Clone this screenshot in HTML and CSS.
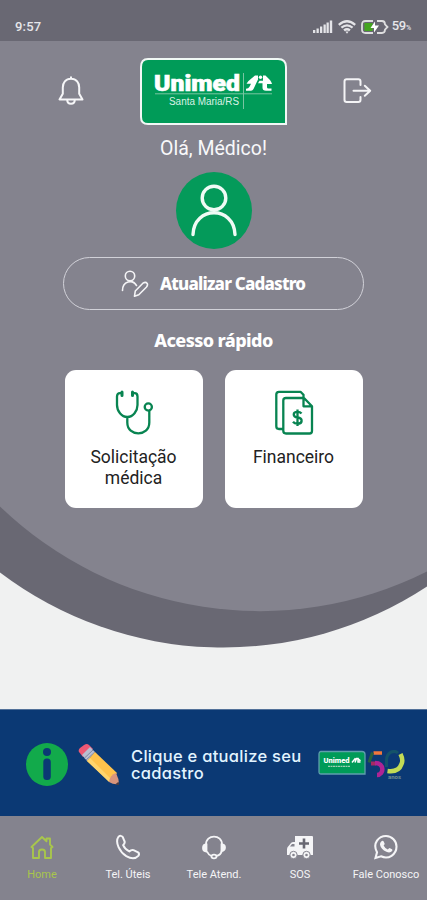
FILE: index.html
```html
<!DOCTYPE html>
<html lang="pt-BR">
<head>
<meta charset="utf-8">
<meta name="viewport" content="width=device-width, initial-scale=1">
<title>Unimed Santa Maria</title>
<link rel="stylesheet" href="styles.css">
</head>
<body>
<div class="app">
  <svg class="backdrop" viewBox="0 0 427 709" aria-hidden="true">
    <path fill="#696873" d="M0 0H427V586.500A370 370 0 0 1 0 572.500Z"/>
    <path fill="#84838e" d="M0 41H427V571.500A374 374 0 0 1 0 506.500Z"/>
  </svg>

  <div class="status">
    <span class="clock">9:57</span>
    <div class="indicators">
      <svg width="20" height="14" viewBox="0 0 20 14" fill="#e4e4e8"><path d="M0 10h2.300v3H0zM3.500 8.500h2.300V13H3.500zM7 6.500h2.300V13H7zM10.500 4.500h2.300V13h-2.300zM13.500 2.500h2.300V13h-2.300zM16.800 .5h2.400V13h-2.400z"/></svg>
      <svg width="18" height="14" viewBox="0 0 18 14" fill="none" stroke="#e4e4e8" stroke-width="2.300"><path d="M.8 4.800Q9-2.200 17.200 4.800M3.400 7.700Q9 3 14.600 7.700M6 10.400Q9 8 12 10.400"/><path d="M7.300 11.600h3.400L9 13.700z" fill="#e4e4e8" stroke="none"/></svg>
      <svg width="28" height="14" viewBox="0 0 28 14"><path d="M12 1H4.500Q1 1 1 4.500v5Q1 13 4.500 13H12M16 1h5q3 0 3 3.500L26.500 7 24 9.500q0 3.500-3 3.500h-5" fill="none" stroke="#dededf" stroke-width="1.800"/><path d="M3.500 3h8v8h-8z" fill="#44a520"/><path d="M14 1.500v4h4l-5 7v-4.500H9.500z" fill="#fff"/></svg>
      <span class="level">59<small>%</small></span>
    </div>
  </div>

  <main class="main">
    <header class="top">
      <svg class="bell" width="26" height="32" viewBox="0 0 26 32" fill="none" stroke="#f6f6f8" stroke-width="2" stroke-linejoin="round" stroke-linecap="round"><path d="M13 2.300v1.500M13 3.800C7.500 3.800 4.800 8 4.800 12.500v6.200L1.500 24.500h23l-3.300-5.800v-6.200C21.200 8 18.500 3.800 13 3.800zM9.200 24.800c0 5.300 7.600 5.300 7.600 0"/></svg>
      <svg class="logo" width="147" height="67" viewBox="0 0 147 67">
        <path d="M8 1h130q8 0 8 8v57H8q-7 0-7-7V9q0-8 7-8z" fill="#009b58" stroke="#f1f8f5" stroke-width="2"/>
        <text x="14" y="33" class="brand" textLength="86" lengthAdjust="spacingAndGlyphs">Unimed</text>
        <text x="29" y="46.500" class="place" textLength="70" lengthAdjust="spacingAndGlyphs">Santa Maria/RS</text>
        <path d="M15 35.800h117M103.500 15v36" stroke="#78c5a1" stroke-width="1" fill="none"/>
        <g fill="#fff">
          <path d="M115 17.500h3v4l-1 2-3.500 7.500q-.8 1.800-2.500 1.800H106v-2q2.500 0 3.500-2l1.500-3h-4.500q1.500-3 4-4.500z"/>
          <path d="M123 17.500h2.500l4.500 4.500q1.500 2 2 4h-5v3.200q0 1.300 1.500 1.300h3v2.300h-5.500q-3.500 0-3.500-3v-4.500h-4.500l1.500-2.500h3.500z"/>
          <circle cx="120.500" cy="19.300" r="1.700"/>
        </g>
      </svg>
      <svg class="exit" width="29" height="26" viewBox="0 0 29 26" fill="none" stroke="#f4f4f6" stroke-width="2" stroke-linecap="round" stroke-linejoin="round"><path d="M17.500 7V3.500q0-2.200-2.200-2.200H3.700Q1.500 1.300 1.500 3.500v18.300q0 2.200 2.200 2.200h11.600q2.200 0 2.200-2.200V19M10.500 12.800H27M21.800 7.800l5.400 5-5.400 5"/></svg>
    </header>

    <p class="hello">Olá, Médico!</p>
    <div class="avatar">
      <svg width="76" height="76" viewBox="0 0 76 76" fill="none" stroke="#effbf5" stroke-width="3.400" stroke-linecap="round"><circle cx="38" cy="26" r="11.800"/><path d="M17 62.500C18 33.500 58 33.500 59 62.500"/></svg>
    </div>
    <a class="update">
      <svg width="28" height="28" viewBox="0 0 28 28" fill="none" stroke="#f4f4f6" stroke-width="1.600" stroke-linecap="round" stroke-linejoin="round"><circle cx="9" cy="6" r="4.700"/><path d="M1.500 20.500C1.500 11.300 11.500 8.700 15.500 15.500M13.500 26.200l.8-5.200 7.600-7.800q2.800-1.800 4.300.2.900 1.800-.9 3.800l-7.500 7.500z"/></svg>
      <span>Atualizar Cadastro</span>
    </a>
    <h2 class="title">Acesso rápido</h2>

    <div class="cards">
      <a class="card">
        <svg width="40" height="46" viewBox="0 0 40 46" fill="none" stroke="#088451" stroke-width="2.300" stroke-linecap="round" stroke-linejoin="round"><path d="M8 3.200H6Q3 3.200 3 6.500v8.500C3 21 7.500 27 13.300 27S23.500 21 23.500 15V6.500Q23.500 3.200 20.500 3.200H18.500M13.300 27v5.500c0 14.500 22 14.500 22 0V21"/><path d="M8 2v3.500M18.500 2v3.500" stroke-width="3"/><circle cx="34.300" cy="17" r="3.600"/></svg>
        <span>Solicitação médica</span>
      </a>
      <a class="card">
        <svg width="40" height="46" viewBox="0 0 40 46" fill="none" stroke="#088451" stroke-width="2.300" stroke-linejoin="round"><path d="M9 39H5q-2.700 0-2.700-2.700V4.500Q2.300 1.800 5 1.800h21.500l3 3V8M12 8h18l8 8.300V41q0 2.500-2.500 2.500H12q-2.700 0-2.700-2.700V10.500Q9.300 8 12 8zM29.500 8v8.300H38"/><path d="M27.500 23.500q-1.300-1.700-4-1.700c-5 0-5 5 0 5.700 5.700.8 5.300 6.200 0 6.200q-3 0-4.500-2M23.500 19.500V36"/></svg>
        <span>Financeiro</span>
      </a>
    </div>
  </main>

  <a class="banner">
    <svg class="info" width="42" height="43" viewBox="0 0 42 43"><ellipse cx="21" cy="21.500" rx="21" ry="21.500" fill="#12aa4b"/><g fill="#0b3974"><circle cx="21" cy="9" r="4"/><rect x="17.300" y="15.500" width="7.500" height="21.500" rx="3.500"/></g></svg>
    <svg class="pencil" width="42" height="42" viewBox="0 0 42 42"><path d="M1 8q-1-2 1-4l4-3q3-2 5 0l4 4L5 13z" fill="#ee5874"/><path d="M4 11L12 3l5 5-8 9z" fill="#b9bed0"/><path d="M6.500 14L15 6M8 16L17 8" stroke="#8188a5" stroke-width="1"/><path d="M9 17L17 8l22 21-7 9z" fill="#ffc34c"/><path d="M9 17l3-3 22 22-3 2z" fill="#ffd56d"/><path d="M31 38q1-7 7-9 3 6 3 11-5 1-10-2z" fill="#d9957c"/><path d="M37 40.500l3.500-2.700.7 2q.2 1.300-1.300 1.300z" fill="#493b45"/></svg>
    <span class="message">Clique e atualize seu cadastro</span>
    <svg class="badge" width="88" height="30" viewBox="0 0 88 30">
      <path d="M3 1.500h41q3 0 3 3V24H3q-2 0-2-2V4.500q0-3 2-3z" fill="#009b58" stroke="#5f9eac" stroke-width="1.300"/>
      <text x="5.500" y="13" class="mini-brand" textLength="26" lengthAdjust="spacingAndGlyphs">Unimed</text>
      <path d="M34 12.500l3.500-4.300M37 12.500l1.500-4h1.500v3.500h2.500M39.500 8.300l3 2.500" fill="none" stroke="#fff" stroke-width="1.500"/>
      <path d="M10 16.300h22" stroke="#9bd0b2" stroke-width="1.200" stroke-dasharray="2 .5"/>
      <g fill="none" stroke-width="4.500"><path d="M55.500 3h8.500" stroke="#f1773c" stroke-width="3.500"/><path d="M54.500 2.500L51 12.500" stroke="#28613e" stroke-width="3"/><path d="M53 13.500h5" stroke="#a42b62" stroke-width="4"/><path d="M57 13c10 0 9 12 2 12" stroke="#ae2494"/><path d="M68.500 17V10C69 1 77 0 80 3" stroke="#14536a" stroke-width="3"/><path d="M82.500 4c2 4 2 8 1 10-2 6-7 8-14 7" stroke="#c2db55"/></g>
      <text x="70" y="29" class="years" textLength="13" lengthAdjust="spacingAndGlyphs">anos</text>
    </svg>
  </a>

  <nav class="tabs">
    <a class="tab active">
      <svg width="26" height="26" viewBox="0 0 26 26" fill="none" stroke="currentColor" stroke-width="1.900" stroke-linejoin="round"><path d="M2.500 13L13 3l4.500 4.300V4.500H21V10.500l2.500 2.500-1.500 1V24h-6v-6q0-2.500-3-2.500T10 18v6H4V14z"/></svg>
      <span>Home</span>
    </a>
    <a class="tab">
      <svg width="26" height="26" viewBox="0 0 26 26" fill="none" stroke="currentColor" stroke-width="2" stroke-linejoin="round"><path d="M3.500 2.800q2.500-2 4.300.3l1.600 4q1 1.800-1.300 4 2 4.400 6.200 6.300 2.200-2 4.200-1.300l4.600 2.300q1.700 1.300.2 3.500-4.300 4.700-12 .3C5 18-.5 8.500 3.500 2.800z"/></svg>
      <span>Tel. Úteis</span>
    </a>
    <a class="tab">
      <svg width="26" height="26" viewBox="0 0 26 26" fill="none" stroke="currentColor" stroke-width="1.800"><path d="M5 11C4.500-.3 21.500-.3 21 11v5q-1 5.500-6 6"/><path d="M5.500 10.500v7Q2 17.500 2 14t3.500-3.500zM20.500 10.500v6.500q3.500-.5 3.500-3.500t-3.500-3z" fill="currentColor"/><path d="M6 17.500q1.500 3.500 4.500 4.500"/><ellipse cx="13" cy="22.500" rx="2.500" ry="1.800"/></svg>
      <span>Tele Atend.</span>
    </a>
    <a class="tab">
      <svg width="28" height="26" viewBox="0 0 28 26"><path d="M9 2h17q1 0 1 1v18H1v-6q0-2 2-3.500L5 9q.8-1 2.500-1H9z" fill="currentColor"/><path d="M4 12.500l2-2.500h2.500v2.500z" fill="#84838e"/><path d="M18 4.500v10M13 9.500h10" stroke="#696873" stroke-width="2.600"/><g fill="currentColor" stroke="#84838e" stroke-width="1"><circle cx="7.500" cy="21" r="3.700"/><circle cx="20.500" cy="21" r="3.700"/></g><g fill="#84838e"><circle cx="7.500" cy="21" r="1.300"/><circle cx="20.500" cy="21" r="1.300"/></g></svg>
      <span>SOS</span>
    </a>
    <a class="tab">
      <svg width="26" height="26" viewBox="0 0 26 26" fill="none" stroke="currentColor" stroke-width="2.100"><path d="M2.500 24l1.500-5.700C-1 9 6 2 13 2c6 0 10.500 5 10.500 10.500C23.500 20.500 15.500 26 8 22.300z"/><path d="M8.200 7.500q1.800-1.500 2.600.3l.8 1.800q.3.800-1 2 1.500 3 4.200 4 1.400-1.900 2.200-1.400l2 1q.9.500.1 1.800-2 2.500-5.700.8-5.500-2.500-6.400-7-.2-2 1.200-3.300z" fill="currentColor" stroke="none"/></svg>
      <span>Fale Conosco</span>
    </a>
  </nav>
</div>
</body>
</html>
```

FILE: styles.css
```css
* { box-sizing: border-box; }

body {
  margin: 0;
  background: #f0f1f1;
  font-family: Roboto, "Liberation Sans", sans-serif;
}

svg { display: block; flex: none; }

.app {
  position: relative;
  width: 427px;
  height: 900px;
  display: flex;
  flex-direction: column;
  overflow: hidden;
}

.backdrop {
  position: absolute;
  top: 0;
  left: 0;
  width: 427px;
  height: 709px;
  z-index: -1;
}

.status {
  height: 41px;
  padding: 12px 16px 0 15px;
  display: flex;
  justify-content: space-between;
  color: #e6e6ea;
  font-size: 13px;
  font-weight: 500;
  line-height: 29px;
}

.clock { letter-spacing: 0.2px; }

.indicators { display: flex; align-items: center; gap: 5px; height: 29px; }
.level { margin-left: -2px; white-space: nowrap; letter-spacing: -0.2px; }
.level small { font-size: 7px; }

.main {
  height: 668px;
  display: flex;
  flex-direction: column;
  align-items: center;
}

.top {
  width: 314px;
  height: 83px;
  padding-top: 17px;
  margin-left: 3px;
  display: flex;
  justify-content: space-between;
  align-items: center;
}

.brand { font: 900 21.5px Roboto, sans-serif; fill: #fff; stroke: #fff; stroke-width: 0.6px; }
.place { font: 400 10px "Liberation Sans", sans-serif; fill: #d9f1e5; }

.hello {
  margin: 13px 0 0;
  color: #f8f8fa;
  font-size: 19.5px;
  line-height: 24px;
}

.avatar {
  width: 76px;
  height: 77px;
  margin-top: 11px;
  border-radius: 50%;
  background: #049a5a;
}

.update {
  width: 301px;
  height: 53px;
  margin-top: 8px;
  padding-left: 57px;
  display: flex;
  align-items: center;
  gap: 11px;
  border: 1.5px solid #d1d1d8;
  border-radius: 27px;
  color: #fff;
  font: 800 17px/24px "Noto Sans", sans-serif;
  letter-spacing: -0.8px;
  white-space: nowrap;
}

.title {
  margin: 18px 0 0;
  color: #fff;
  font: 800 18px/24px "Noto Sans", sans-serif;
  letter-spacing: -0.6px;
}

.cards { margin-top: 18px; display: flex; gap: 22px; }

.card {
  width: 138px;
  height: 138px;
  padding: 20px 16px 0;
  display: flex;
  flex-direction: column;
  align-items: center;
  gap: 11px;
  border-radius: 11px;
  background: #fff;
  color: #222;
  font-size: 17.5px;
  line-height: 21px;
  text-align: center;
}

.banner {
  height: 107px;
  padding: 3px 21px 0 26px;
  display: flex;
  align-items: center;
  background: #0b3974;
  border-top: 1px solid #527199;
}

.pencil { margin-left: 10px; }

.message {
  width: 178px;
  margin: 0 12px 0 11px;
  color: #e2f4ff;
  font: 500 16.5px/17px Inter, sans-serif;
  font-feature-settings: "cv11";
  letter-spacing: 0.28px;
}

.mini-brand { font: 900 7.5px Roboto, sans-serif; fill: #fff; }
.years { font: 700 5px Roboto, sans-serif; fill: #708e90; }

.tabs {
  height: 84px;
  padding-top: 18px;
  display: grid;
  grid-template-columns: repeat(5, 86px);
  margin-left: -1px;
  background: #84838e;
}

.tab {
  display: flex;
  flex-direction: column;
  align-items: center;
  gap: 7px;
  color: #f5f5f7;
  font-size: 11px;
  line-height: 15px;
  white-space: nowrap;
}

.tab.active { color: #a8c64c; }
```
